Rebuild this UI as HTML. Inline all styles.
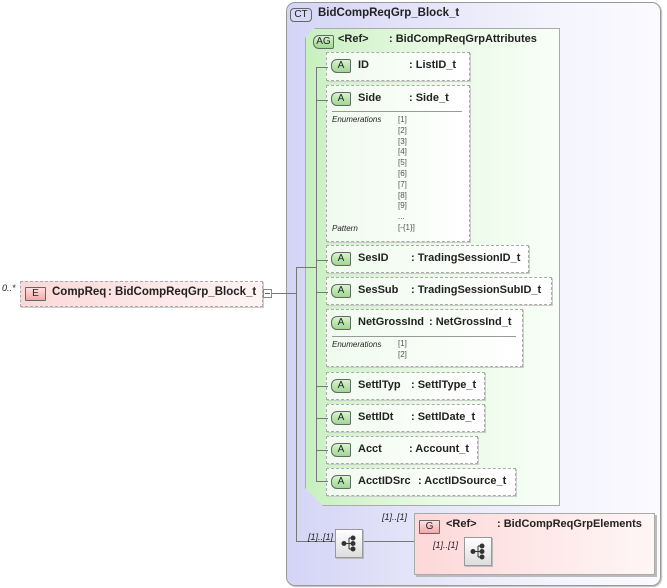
<!DOCTYPE html>
<html><head><meta charset="utf-8"><style>
body{margin:0;width:667px;height:588px;background:#fff;position:relative;overflow:hidden;font-family:"Liberation Sans",Arial,sans-serif;font-size:11px;color:#222}
.a{position:absolute}
.ct{left:286px;top:2px;width:373px;height:582px;border:1px solid #999;border-radius:9px;background:linear-gradient(90deg,#d4d4f6,#f4f4fd 70%,#fafaff);box-shadow:1px 1px 1px #bbb}
.ag{left:305px;top:28px;width:253px;height:476px;border:1px solid #aaa;background:linear-gradient(90deg,#c8f0c0,#e8fae4 50%,#f8fff8);clip-path:polygon(10px 0,100% 0,100% 100%,18px 100%,0 calc(100% - 18px),0 10px);box-shadow:2px 2px 0 #bbb}
.at{position:absolute;border:1px dashed #aaa;background:linear-gradient(90deg,#f0fbee,#fff);box-shadow:1px 1px 0 #ccc}
.bd{position:absolute;font-size:10px;border:1px solid #666;border-radius:6px 2px 2px 6px;text-align:center;line-height:12px}
.ba{left:4px;top:6px;width:18px;height:12px;background:linear-gradient(#d8f4d0,#9ed890)}
.nm{position:absolute;left:31px;top:6px;font-weight:bold;white-space:nowrap}
.ty{position:absolute;top:6px;font-weight:bold;white-space:nowrap}
.en{position:absolute;font-size:8px;font-style:italic;color:#222}
.ev{position:absolute;font-size:8px;color:#555;line-height:10.8px}
.hl{position:absolute;background:#777;height:1px}
.vl{position:absolute;background:#777;width:1px}
.seq{position:absolute;width:26px;height:27px;border:1px solid #999;background:linear-gradient(#fff,#ddd);box-shadow:1px 1px 0 #bbb}
.it{position:absolute;font-size:9px;font-style:italic;white-space:nowrap}
</style></head><body>
<div class="a ct"></div>
<div class="bd" style="left:290px;top:8px;width:20px;height:12px;background:#d8d8f8;border-radius:4px">CT</div>
<div class="a" style="left:318px;top:7px;font-weight:bold;font-size:11.5px">BidCompReqGrp_Block_t</div>
<div class="a ag"></div>
<div class="bd" style="left:313px;top:35px;width:19px;height:12px;background:linear-gradient(#d8f4d0,#9ed890)">AG</div>
<div class="a" style="left:338px;top:33px;font-weight:bold">&lt;Ref&gt;</div>
<div class="a" style="left:389px;top:33px;font-weight:bold">: BidCompReqGrpAttributes</div>

<!-- connectors -->
<div class="vl" style="left:316px;top:67px;height:415px"></div>
<div class="hl" style="left:296px;top:267px;width:20px"></div>
<div class="vl" style="left:296px;top:267px;height:274px"></div>
<div class="hl" style="left:262px;top:293px;width:34px"></div>
<div class="hl" style="left:296px;top:541px;width:39px"></div>
<div class="hl" style="left:362px;top:541px;width:52px"></div>
<div class="hl" style="left:414px;top:550px;width:50px"></div>

<div class="at" style="left:326px;top:52px;width:142px;height:27px"><div class="bd ba">A</div><div class="nm">ID</div><div class="ty" style="left:82px">: ListID_t</div></div>
<div class="hl" style="left:316px;top:67px;width:12px"></div>
<div class="at" style="left:326px;top:85px;width:142px;height:155px"><div class="bd ba">A</div><div class="nm">Side</div><div class="ty" style="left:82px">: Side_t</div>
<div class="hl" style="left:5px;top:25px;width:130px;background:#999"></div>
<div class="en" style="left:5px;top:29px">Enumerations</div>
<div class="ev" style="left:71px;top:29px">[1]<br>[2]<br>[3]<br>[4]<br>[5]<br>[6]<br>[7]<br>[8]<br>[9]<br>...</div>
<div class="en" style="left:5px;top:138px">Pattern</div><div class="ev" style="left:71px;top:137px">[-{1}]</div></div>
<div class="hl" style="left:316px;top:100px;width:12px"></div>
<div class="at" style="left:326px;top:245px;width:201px;height:26px"><div class="bd ba">A</div><div class="nm">SesID</div><div class="ty" style="left:84px">: TradingSessionID_t</div></div>
<div class="hl" style="left:316px;top:260px;width:12px"></div>
<div class="at" style="left:326px;top:277px;width:224px;height:26px"><div class="bd ba">A</div><div class="nm">SesSub</div><div class="ty" style="left:84px">: TradingSessionSubID_t</div></div>
<div class="hl" style="left:316px;top:292px;width:12px"></div>
<div class="at" style="left:326px;top:309px;width:195px;height:56px"><div class="bd ba">A</div><div class="nm">NetGrossInd</div><div class="ty" style="left:102px">: NetGrossInd_t</div>
<div class="hl" style="left:5px;top:26px;width:184px;background:#999"></div>
<div class="en" style="left:5px;top:30px">Enumerations</div><div class="ev" style="left:71px;top:29px">[1]<br>[2]</div></div>
<div class="at" style="left:326px;top:372px;width:157px;height:26px"><div class="bd ba">A</div><div class="nm">SettlTyp</div><div class="ty" style="left:84px">: SettlType_t</div></div>
<div class="hl" style="left:316px;top:386px;width:12px"></div>
<div class="at" style="left:326px;top:404px;width:157px;height:26px"><div class="bd ba">A</div><div class="nm">SettlDt</div><div class="ty" style="left:84px">: SettlDate_t</div></div>
<div class="hl" style="left:316px;top:418px;width:12px"></div>
<div class="at" style="left:326px;top:436px;width:150px;height:26px"><div class="bd ba">A</div><div class="nm">Acct</div><div class="ty" style="left:82px">: Account_t</div></div>
<div class="hl" style="left:316px;top:450px;width:12px"></div>
<div class="at" style="left:326px;top:468px;width:188px;height:26px"><div class="bd ba">A</div><div class="nm">AcctIDSrc</div><div class="ty" style="left:91px">: AcctIDSource_t</div></div>
<div class="hl" style="left:316px;top:481px;width:12px"></div>

<!-- element -->
<div class="it" style="left:2px;top:283px">0..*</div>
<div class="a" style="left:20px;top:281px;width:241px;height:24px;border:1px dashed #aaa;background:linear-gradient(90deg,#fbd8d8,#fff4f4);box-shadow:1px 1px 0 #ccc"></div>
<div class="bd" style="left:25px;top:287px;width:19px;height:12px;border-radius:1px;background:linear-gradient(#fde0e0,#f4a8a8)">E</div>
<div class="a" style="left:52px;top:286px;font-weight:bold;font-size:11.5px">CompReq</div>
<div class="a" style="left:108px;top:286px;font-weight:bold;font-size:11.5px">: BidCompReqGrp_Block_t</div>
<div class="a" style="left:263px;top:289px;width:7px;height:7px;border:1px solid #888;background:#fff"><div style="position:absolute;left:1px;top:3px;width:5px;height:1px;background:#666"></div></div>

<!-- sequences -->
<div class="it" style="left:308px;top:532px">[1]..[1]</div>
<div class="seq" style="left:335px;top:529px"><svg width="26" height="27"><g fill="#333" stroke="#333"><circle cx="8" cy="13.5" r="2"/><circle cx="17" cy="8" r="2"/><circle cx="17" cy="13.5" r="2"/><circle cx="17" cy="19" r="2"/><path d="M8 13.5H17M13 8V19M13 8H17M13 19H17" fill="none"/></g></svg></div>
<div class="it" style="left:382px;top:512px">[1]..[1]</div>
<div class="a" style="left:414px;top:513px;width:239px;height:60px;border:1px solid #aaa;background:linear-gradient(90deg,#fdd8d8,#fff6f6);box-shadow:2px 2px 0 #bbb"></div>
<div class="bd" style="left:419px;top:520px;width:19px;height:12px;border-radius:1px;background:linear-gradient(#fde0e0,#f4a8a8)">G</div>
<div class="a" style="left:446px;top:518px;font-weight:bold">&lt;Ref&gt;</div>
<div class="a" style="left:497px;top:518px;font-weight:bold">: BidCompReqGrpElements</div>
<div class="it" style="left:433px;top:540px">[1]..[1]</div>
<div class="seq" style="left:464px;top:537px"><svg width="26" height="27"><g fill="#333" stroke="#333"><circle cx="8" cy="13.5" r="2"/><circle cx="17" cy="8" r="2"/><circle cx="17" cy="13.5" r="2"/><circle cx="17" cy="19" r="2"/><path d="M8 13.5H17M13 8V19M13 8H17M13 19H17" fill="none"/></g></svg></div>
</body></html>
